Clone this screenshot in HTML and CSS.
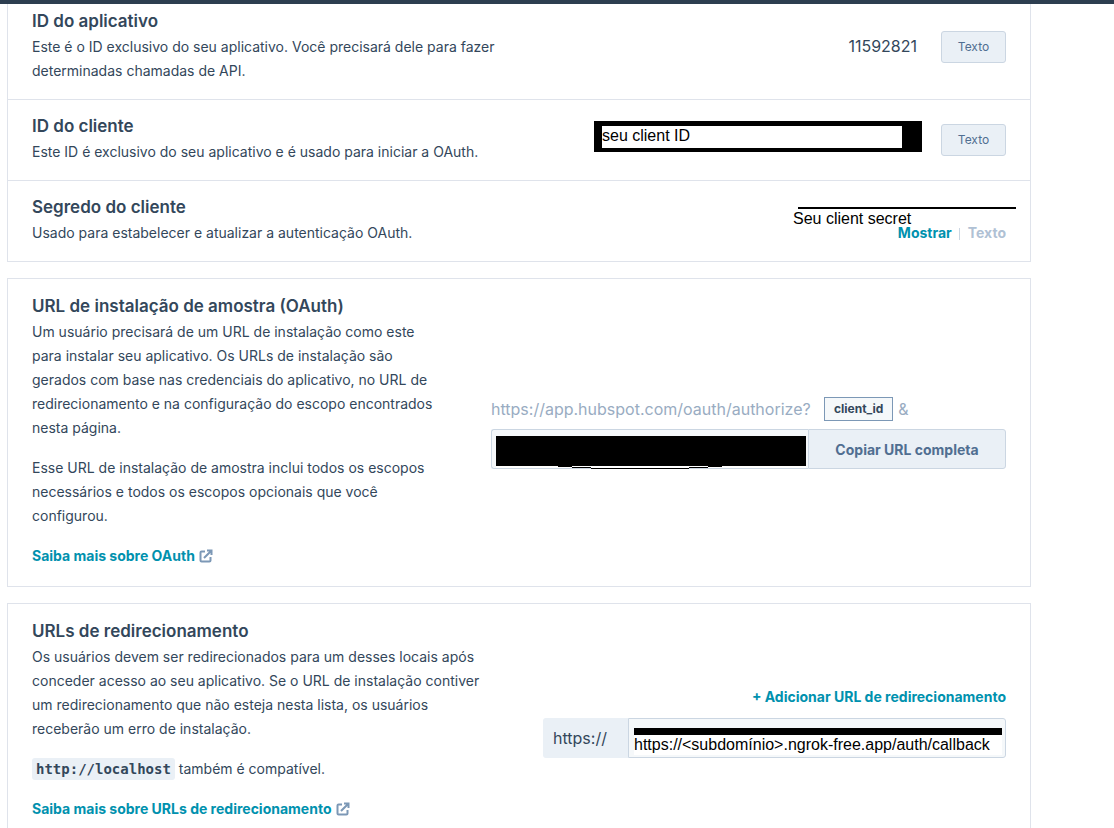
FILE: index.html
```
<!DOCTYPE html>
<html lang="pt-BR">
<head>
<meta charset="utf-8">
<meta name="viewport" content="width=device-width, initial-scale=1">
<title>Autenticação do aplicativo</title>
<link rel="stylesheet" href="styles.css">
</head>
<body>
<header class="topbar"></header>
<main class="page">
  <section class="card card-top">
    <div class="row row-first">
      <div class="info">
        <h2>ID do aplicativo</h2>
        <p>Este é o ID exclusivo do seu aplicativo. Você precisará dele para fazer<br>determinadas chamadas de API.</p>
      </div>
      <div class="actions">
        <span class="app-id">11592821</span>
        <button class="btn" type="button">Texto</button>
      </div>
    </div>
    <div class="row">
      <div class="info">
        <h2><label for="client-id">ID do cliente</label></h2>
        <p>Este ID é exclusivo do seu aplicativo e é usado para iniciar a OAuth.</p>
      </div>
      <div class="actions">
        <input class="client-id" id="client-id" type="text" value="seu client ID" readonly>
        <button class="btn" type="button">Texto</button>
      </div>
    </div>
    <div class="row row-secret">
      <div class="info">
        <h2>Segredo do cliente</h2>
        <p>Usado para estabelecer e atualizar a autenticação OAuth.</p>
      </div>
      <span class="secret">Seu client secret</span>
      <div class="secret-actions">
        <button class="text-btn" type="button">Mostrar</button>
        <button class="text-btn" type="button" disabled>Texto</button>
      </div>
    </div>
  </section>

  <section class="card split">
    <div class="info">
      <h2>URL de instalação de amostra (OAuth)</h2>
      <p>Um usuário precisará de um URL de instalação como este<br>para instalar seu aplicativo. Os URLs de instalação são<br>gerados com base nas credenciais do aplicativo, no URL de<br>redirecionamento e na configuração do escopo encontrados<br>nesta página.</p>
      <p>Esse URL de instalação de amostra inclui todos os escopos<br>necessários e todos os escopos opcionais que você<br>configurou.</p>
      <p><a class="link" href="#oauth">Saiba mais sobre OAuth<svg class="ext" viewBox="0 0 14 14" aria-hidden="true"><path d="M6 2.5H2.6Q1.5 2.5 1.5 3.6V11.4Q1.5 12.5 2.6 12.5H10.4Q11.5 12.5 11.5 11.4V8M5 9L11.8 2.2M8 1.5H12.5V6"/></svg></a></p>
    </div>
    <div class="install">
      <div class="url-line"><span class="url-base">https://app.hubspot.com/oauth/authorize?</span><span class="tag">client_id</span><span>&amp;</span></div>
      <div class="group">
        <div class="redacted">
          <input class="field" type="text" aria-label="URL de instalação" readonly>
          <svg class="scribble" viewBox="0 0 310 33" aria-hidden="true"><path class="ink" d="M0 0H310V30H0Z"/><path class="paper" d="M0 30H310V32H0Z"/><path class="ink" d="M62 30H76V31H62ZM76 31H95V32H76ZM95 32H193V33H95ZM193 31H212V32H193ZM212 30H226V31H212Z"/></svg>
        </div>
        <button class="copy" type="button">Copiar URL completa</button>
      </div>
    </div>
  </section>

  <section class="card split">
    <div class="info">
      <h2>URLs de redirecionamento</h2>
      <p>Os usuários devem ser redirecionados para um desses locais após<br>conceder acesso ao seu aplicativo. Se o URL de instalação contiver<br>um redirecionamento que não esteja nesta lista, os usuários<br>receberão um erro de instalação.</p>
      <p><code>http://localhost</code> também é compatível.</p>
      <p><a class="link" href="#redirects">Saiba mais sobre URLs de redirecionamento<svg class="ext" viewBox="0 0 14 14" aria-hidden="true"><path d="M6 2.5H2.6Q1.5 2.5 1.5 3.6V11.4Q1.5 12.5 2.6 12.5H10.4Q11.5 12.5 11.5 11.4V8M5 9L11.8 2.2M8 1.5H12.5V6"/></svg></a></p>
    </div>
    <div class="redirect">
      <button class="text-btn add" type="button">+ Adicionar URL de redirecionamento</button>
      <div class="group">
        <label class="prefix" for="redirect-url">https://</label>
        <div class="redirect-field">
          <input class="callback" id="redirect-url" type="text" value="https://&lt;subdomínio&gt;.ngrok-free.app/auth/callback">
        </div>
      </div>
    </div>
  </section>
</main>
</body>
</html>
```
FILE: styles.css
```
* {
  box-sizing: border-box;
}

body {
  margin: 0;
  background: #fff;
  color: #33475b;
  font-family: Inter, "Noto Sans", sans-serif;
  font-size: 14px;
  line-height: 24px;
}

button,
input {
  margin: 0;
  font-family: inherit;
}

button {
  cursor: pointer;
  white-space: nowrap;
}

.topbar {
  height: 4px;
  background: #2d3e50;
}

.page {
  display: flex;
  flex-direction: column;
  gap: 16px;
  margin: 0 83px 0 7px;
}

.card {
  border: 1px solid #dfe3eb;
}

.card-top {
  border-top: 0;
}

.row {
  display: flex;
  justify-content: space-between;
  align-items: center;
  padding: 16px 24px;
}

.row + .row {
  border-top: 1px solid #dfe3eb;
}

.row-first {
  padding-top: 7px;
}

.row-secret {
  position: relative;
}

.info {
  white-space: nowrap;
}

h2 {
  margin: 0 0 4px;
  font-size: 17px;
  font-weight: 600;
  line-height: 20px;
}

p {
  margin: 0;
}

p + p {
  margin-top: 16px;
}

.actions {
  display: flex;
  align-items: center;
}

.app-id {
  margin: 0 24px 2px 0;
  font-size: 16px;
}

.btn {
  width: 65px;
  height: 32px;
  padding: 0 0 2px;
  border: 1px solid #cbd6e2;
  border-radius: 3px;
  background: #eaf0f6;
  color: #506e91;
  font-size: 12px;
}

.client-id {
  width: 328px;
  height: 31px;
  margin: 0 19px 7px 0;
  padding: 0 0 2px;
  border: solid #000;
  border-width: 5px 20px 4px 8px;
  border-radius: 0;
  background: #fff;
  color: #000;
  font-family: "Liberation Sans", Arial, sans-serif;
  font-size: 16px;
}

.secret {
  position: absolute;
  top: 26px;
  right: 14px;
  width: 223px;
  color: #000;
  font-family: "Liberation Sans", Arial, sans-serif;
  font-size: 16px;
  line-height: 24px;
}

.secret::before {
  content: "";
  position: absolute;
  top: 0;
  right: 0;
  width: 218px;
  height: 2px;
  background: #000;
}

.secret-actions {
  display: flex;
  align-self: flex-end;
  align-items: center;
}

.text-btn {
  padding: 0;
  border: 0;
  background: none;
  color: #0091ae;
  font-size: 14px;
  font-weight: 700;
  line-height: 24px;
}

.text-btn:disabled {
  color: #b0c1d4;
}

.text-btn + .text-btn::before {
  content: "";
  display: inline-block;
  width: 1px;
  height: 12px;
  margin: 0 8px 0 7px;
  background: #cbd6e2;
  vertical-align: -2px;
}

.split {
  display: flex;
  justify-content: space-between;
  align-items: center;
  padding: 17px 24px 18px;
}

.link {
  color: #0091ae;
  font-weight: 700;
  text-decoration: none;
}

.ext {
  width: 14px;
  height: 14px;
  margin-left: 4px;
  vertical-align: -2px;
  fill: none;
  stroke: #7c98b6;
  stroke-width: 2;
}

.install {
  display: flex;
  flex-direction: column;
  gap: 8px;
  width: 515px;
  margin-top: 2px;
}

.url-line {
  display: flex;
  align-items: center;
  gap: 5px;
  color: #99acc2;
  font-size: 16px;
  white-space: nowrap;
}

.url-base {
  min-width: 328px;
}

.tag {
  padding: 0 9px;
  border: 1px solid #7c98b6;
  background: #f5f8fa;
  color: #33475b;
  font-size: 12px;
  font-weight: 700;
  line-height: 22px;
}

.group {
  display: flex;
  height: 40px;
}

.redacted {
  position: relative;
  flex: 1;
}

.field {
  width: 100%;
  height: 100%;
  border: 1px solid #cbd6e2;
  border-right: 0;
  border-radius: 3px 0 0 3px;
  background: #f5f8fa;
}

.scribble {
  position: absolute;
  top: 7px;
  left: 5px;
  width: 310px;
  height: 33px;
}

.ink {
  fill: #000;
}

.paper {
  fill: #fff;
}

.copy {
  width: 198px;
  padding: 0;
  border: 1px solid #cbd6e2;
  border-radius: 0 3px 3px 0;
  background: #eaf0f6;
  color: #506e91;
  font-size: 14px;
  font-weight: 700;
}

code {
  padding: 3px 4px;
  border-radius: 3px;
  background: #eaf0f6;
  font-family: "DejaVu Sans Mono", monospace;
  font-size: 14px;
  font-weight: 600;
  line-height: 16px;
}

.redirect {
  display: flex;
  flex-direction: column;
  gap: 9px;
  width: 463px;
}

.add {
  align-self: flex-end;
}

.prefix {
  width: 85px;
  padding-left: 10px;
  border-radius: 3px 0 0 3px;
  background: #eaf0f6;
  font-size: 16px;
  line-height: 40px;
}

.redirect-field {
  position: relative;
  flex: 1;
}

.redirect-field::before {
  content: "";
  position: absolute;
  top: 10px;
  left: 6px;
  right: 4px;
  height: 7px;
  background: #000;
}

.callback {
  width: 100%;
  height: 100%;
  padding: 16px 3px 2px 5px;
  border: 1px solid #cbd6e2;
  border-radius: 0 3px 3px 0;
  background: linear-gradient(#fff, #fff) content-box, #f5f8fa;
  color: #000;
  font-family: "Liberation Sans", Arial, sans-serif;
  font-size: 16px;
}
```
